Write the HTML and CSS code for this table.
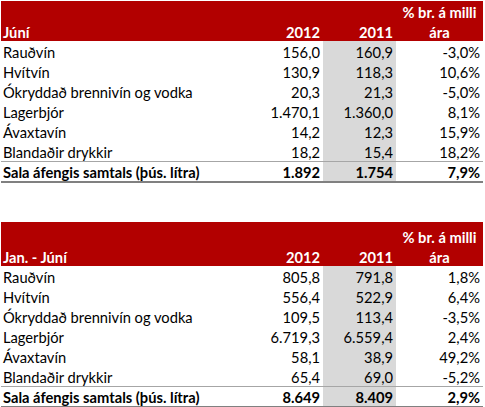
FILE: index.html
```html
<!DOCTYPE html>
<html lang="is">
<head>
<meta charset="utf-8">
<title>Sala áfengis</title>
<link rel="stylesheet" href="styles.css">
</head>
<body>
<table class="sales">
  <colgroup><col class="c-label"><col class="c-num"><col class="c-num"><col class="c-pct"></colgroup>
  <thead>
    <tr class="h1"><th></th><th></th><th></th><th class="pct-h">% br. á milli</th></tr>
    <tr class="h2"><th class="lbl">Júní</th><th class="num">2012</th><th class="num">2011</th><th class="pct-h">ára</th></tr>
  </thead>
  <tbody>
    <tr><td class="lbl">Rauðvín</td><td class="num">156,0</td><td class="num prev">160,9</td><td class="num">-3,0%</td></tr>
    <tr><td class="lbl">Hvítvín</td><td class="num">130,9</td><td class="num prev">118,3</td><td class="num">10,6%</td></tr>
    <tr><td class="lbl">Ókryddað brennivín og vodka</td><td class="num">20,3</td><td class="num prev">21,3</td><td class="num">-5,0%</td></tr>
    <tr><td class="lbl">Lagerbjór</td><td class="num">1.470,1</td><td class="num prev">1.360,0</td><td class="num">8,1%</td></tr>
    <tr><td class="lbl">Ávaxtavín</td><td class="num">14,2</td><td class="num prev">12,3</td><td class="num">15,9%</td></tr>
    <tr><td class="lbl">Blandaðir drykkir</td><td class="num">18,2</td><td class="num prev">15,4</td><td class="num">18,2%</td></tr>
    <tr class="total"><td class="lbl">Sala áfengis samtals (þús. lítra)</td><td class="num">1.892</td><td class="num prev">1.754</td><td class="num">7,9%</td></tr>
  </tbody>
</table>

<table class="sales second">
  <colgroup><col class="c-label"><col class="c-num"><col class="c-num"><col class="c-pct"></colgroup>
  <thead>
    <tr class="h1 tall"><th></th><th></th><th></th><th class="pct-h">% br. á milli</th></tr>
    <tr class="h2"><th class="lbl">Jan. - Júní</th><th class="num">2012</th><th class="num">2011</th><th class="pct-h">ára</th></tr>
  </thead>
  <tbody>
    <tr><td class="lbl">Rauðvín</td><td class="num">805,8</td><td class="num prev">791,8</td><td class="num">1,8%</td></tr>
    <tr><td class="lbl">Hvítvín</td><td class="num">556,4</td><td class="num prev">522,9</td><td class="num">6,4%</td></tr>
    <tr><td class="lbl">Ókryddað brennivín og vodka</td><td class="num">109,5</td><td class="num prev">113,4</td><td class="num">-3,5%</td></tr>
    <tr><td class="lbl">Lagerbjór</td><td class="num">6.719,3</td><td class="num prev">6.559,4</td><td class="num">2,4%</td></tr>
    <tr><td class="lbl">Ávaxtavín</td><td class="num">58,1</td><td class="num prev">38,9</td><td class="num">49,2%</td></tr>
    <tr><td class="lbl">Blandaðir drykkir</td><td class="num">65,4</td><td class="num prev">69,0</td><td class="num">-5,2%</td></tr>
    <tr class="total"><td class="lbl">Sala áfengis samtals (þús. lítra)</td><td class="num">8.649</td><td class="num prev">8.409</td><td class="num">2,9%</td></tr>
  </tbody>
</table>
</body>
</html>
```

FILE: styles.css
```css
html, body {
  margin: 0;
  padding: 0;
  background: #ffffff;
}
body {
  padding: 1px 0 0 1px;
  font-family: Lato, "Open Sans", sans-serif;
  font-size: 14.7px;
  color: #000000;
}
.sales {
  border-collapse: collapse;
  table-layout: fixed;
  width: 482px;
}
.sales.second {
  margin-top: 39px;
}
.c-label { width: 249px; }
.c-num { width: 73px; }
.c-pct { width: 87px; }

.sales th,
.sales td {
  padding: 0 3px 0 2px;
  height: 20px;
  line-height: 18px;
  vertical-align: bottom;
  white-space: nowrap;
  overflow: hidden;
}
.sales thead tr {
  background: #b20000;
  color: #ffffff;
}
.sales th {
  font-weight: 700;
}
.sales tr.tall th {
  height: 24px;
}
.sales .lbl { text-align: left; }
.sales .num { text-align: right; }
.sales .pct-h { text-align: center; padding: 0; }
.sales td.prev { background: #d9d9d9; }

.sales tr.total td {
  height: 19px;
  font-weight: 700;
  border-top: 1px solid #a6a6a6;
  border-bottom: 2px solid #808080;
}
```
